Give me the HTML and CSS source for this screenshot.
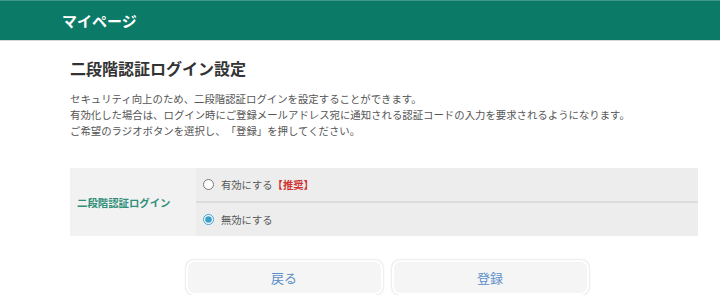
FILE: index.html
```html
<!DOCTYPE html>
<html lang="ja">
<head>
    <meta charset="UTF-8">
    <meta name="viewport" content="width=device-width, initial-scale=1.0">
    <title>マイページ</title>
    <link rel="stylesheet" href="styles.css">
</head>
<body>
    <div class="header">
        <h1>マイページ</h1>
    </div>

    <div class="main">
        <h2>二段階認証ログイン設定</h2>
        <p class="lead">
            セキュリティ向上のため、二段階認証ログインを設定することができます。<br>
            有効化した場合は、ログイン時にご登録メールアドレス宛に通知される認証コードの入力を要求されるようになります。<br>
            ご希望のラジオボタンを選択し、「登録」を押してください。
        </p>

        <div class="form-table">
            <div class="form-label">二段階認証ログイン</div>
            <div class="form-options">
                <label class="option">
                    <input type="radio" name="twofactor" value="1">
                    <span>有効にする<em class="recommend">【推奨】</em></span>
                </label>
                <label class="option">
                    <input type="radio" name="twofactor" value="0" checked>
                    <span>無効にする</span>
                </label>
            </div>
        </div>

        <div class="buttons">
            <button type="button" class="btn">戻る</button>
            <button type="button" class="btn">登録</button>
        </div>
    </div>
</body>
</html>
```

FILE: styles.css
```css
body {
    margin: 0;
    font-family: "Noto Sans CJK JP", "Noto Sans", sans-serif;
    background-color: #ffffff;
    color: #333333;
    text-spacing-trim: space-all;
}
.header {
    background-color: #0b7a67;
    border-top: 1px solid #3c9888;
    border-bottom: 1px solid #d8d8d8;
    height: 39px;
    padding-left: 62px;
    display: flex;
    align-items: center;
}
.header h1 {
    margin: 0;
    color: #ffffff;
    font-size: 15px;
    font-weight: bold;
    line-height: 20px;
}
.main {
    padding: 0 22px 0 70px;
}
.main h2 {
    margin: 17px 0 0;
    font-size: 16px;
    font-weight: bold;
    line-height: 20px;
    color: #333333;
}
.lead {
    margin: 13px 0 0;
    font-size: 10.4px;
    line-height: 16px;
    color: #555555;
}
.form-table {
    margin-top: 29px;
    display: flex;
    height: 68px;
}
.form-label {
    width: 126px;
    background-color: #f2f2f2;
    color: #2f8f78;
    font-size: 10.4px;
    font-weight: bold;
    display: flex;
    align-items: center;
    padding-left: 7px;
    box-sizing: border-box;
}
.form-options {
    flex: 1;
    display: flex;
    flex-direction: column;
    background-color: #ededed;
}
.option {
    flex: 1;
    display: flex;
    align-items: center;
    gap: 7px;
    padding-left: 7px;
    font-size: 10.3px;
    color: #555555;
}
.option + .option {
    border-top: 2px solid #dcdcdc;
}
.option input {
    margin: 0;
    width: 11px;
    height: 11px;
    accent-color: #3a9fc6;
}
.recommend {
    font-style: normal;
    font-weight: bold;
    color: #d0302c;
}
.buttons {
    margin-top: 24px;
    display: flex;
    justify-content: center;
    gap: 9px;
    padding-left: 6px;
}
.btn {
    width: 197px;
    height: 35px;
    background-color: #f5f5f5;
    border: 2px solid #ffffff;
    border-radius: 8px;
    box-shadow: 0 0 2px rgba(0, 0, 0, 0.25);
    color: #5b8fc8;
    font-family: "Noto Sans CJK JP", "Noto Sans", sans-serif;
    font-size: 13px;
}
```
